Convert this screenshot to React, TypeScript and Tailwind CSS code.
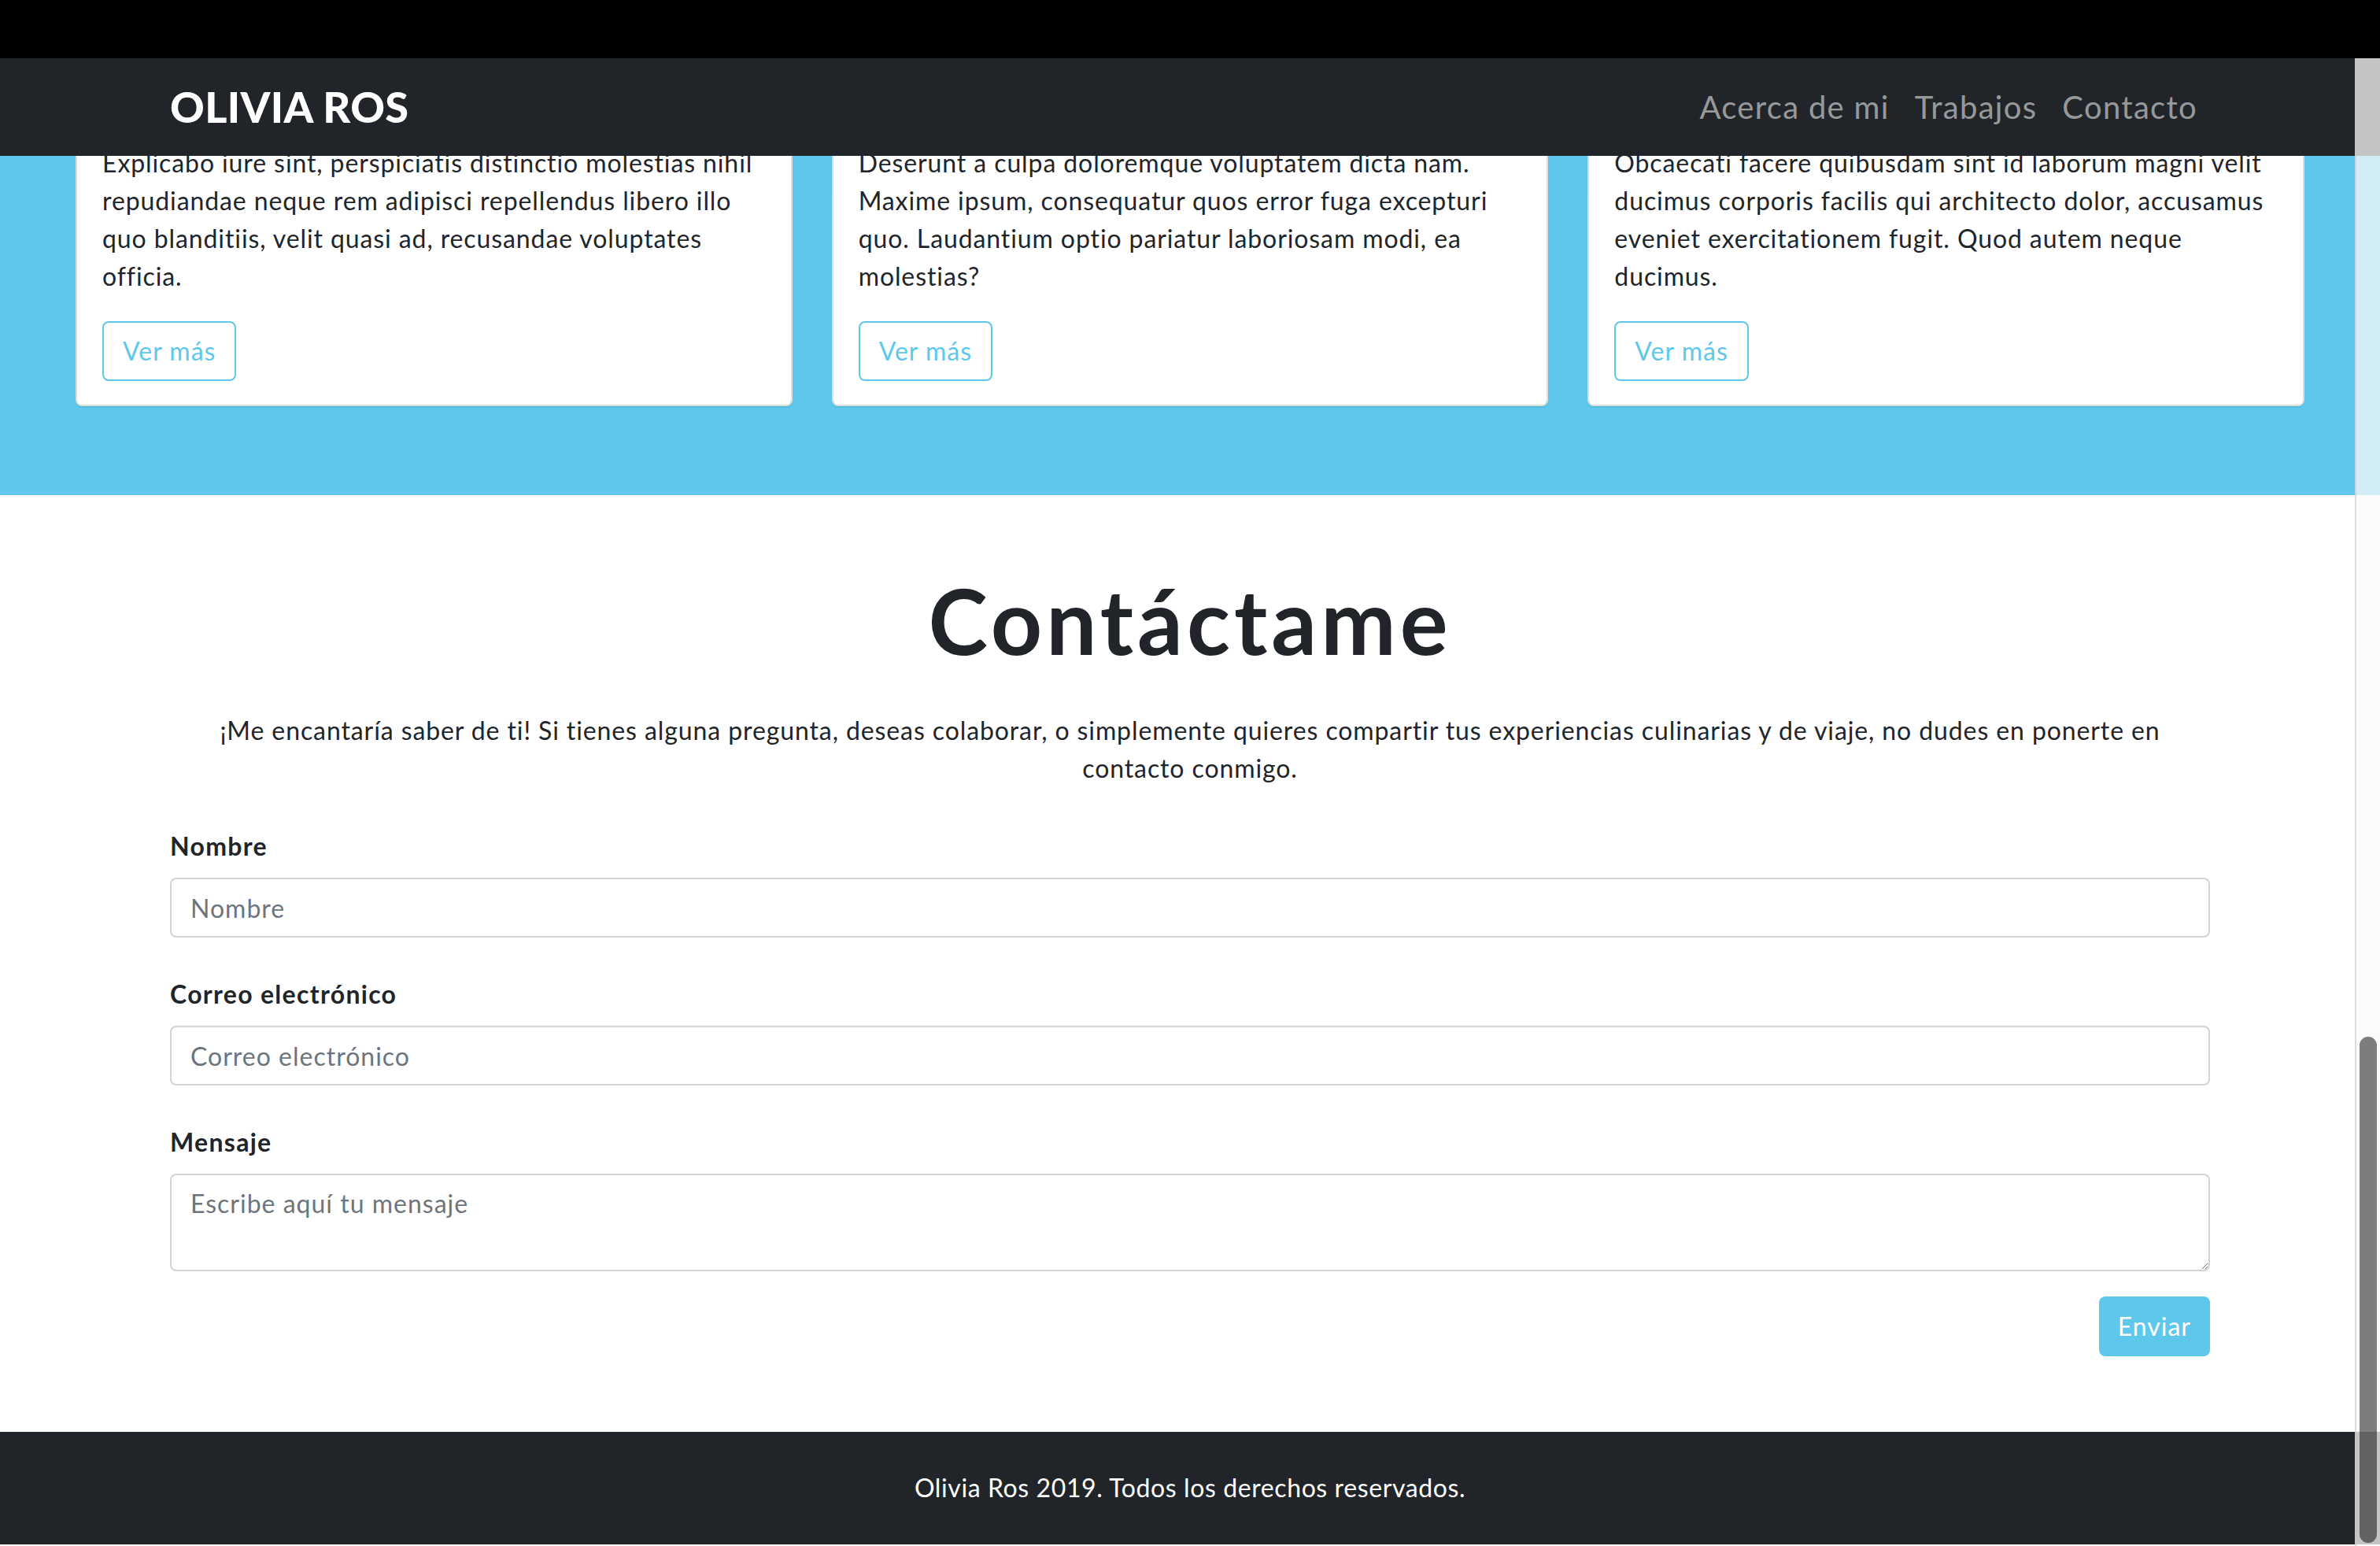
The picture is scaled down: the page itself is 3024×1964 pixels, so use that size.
import React from "react";

const cards: string[][] = [
  [
    "Explicabo iure sint, perspiciatis distinctio molestias nihil",
    "repudiandae neque rem adipisci repellendus libero illo",
    "quo blanditiis, velit quasi ad, recusandae voluptates",
    "officia.",
  ],
  [
    "Deserunt a culpa doloremque voluptatem dicta nam.",
    "Maxime ipsum, consequatur quos error fuga excepturi",
    "quo. Laudantium optio pariatur laboriosam modi, ea",
    "molestias?",
  ],
  [
    "Obcaecati facere quibusdam sint id laborum magni velit",
    "ducimus corporis facilis qui architecto dolor, accusamus",
    "eveniet exercitationem fugit. Quod autem neque",
    "ducimus.",
  ],
];

function Card({ lines }: { lines: string[] }) {
  return (
    <div className="rounded-b-[8px] border-2 border-t-0 border-[rgba(0,0,0,0.13)] bg-white px-[32px] pb-[30px] pt-[25px] shadow-[0_2px_0_rgba(0,0,0,0.06)]">
      <p className="mb-[33px] text-[32px] leading-[48px] tracking-[0.9px]">
        {lines.map((l, i) => (
          <span key={i} className="block whitespace-nowrap">
            {l}
          </span>
        ))}
      </p>
      <button className="h-[76px] rounded-[8px] border-2 border-[#5dc8ec] bg-white px-[24px] text-[32px] leading-[72px] tracking-[1px] text-[#5dc8ec]">
        Ver más
      </button>
    </div>
  );
}

function Field({ label, placeholder }: { label: string; placeholder: string }) {
  return (
    <div className="mb-[48px]">
      <label className="mb-[16px] block text-[32px] font-bold leading-[48px] tracking-[1.3px]">{label}</label>
      <input
        className="block h-[76px] w-full rounded-[8px] border-2 border-[#ced4da] bg-white px-[24px] text-[32px] leading-[48px] tracking-[1px] text-[#212529] outline-none placeholder:text-[#6c757d]"
        placeholder={placeholder}
      />
    </div>
  );
}

export default function App() {
  return (
    <div className="relative h-[1964px] w-[3024px] overflow-hidden bg-white font-['Lato','Open_Sans',sans-serif] text-[#212529]">
      <div className="h-[74px] bg-black" />
      <header className="relative z-10 flex h-[124px] items-center justify-between bg-[#212529] px-[216px]">
        <span className="text-[54px] font-black leading-none tracking-[0.4px] text-white">OLIVIA ROS</span>
        <nav className="flex">
          {["Acerca de mi", "Trabajos", "Contacto"].map((t) => (
            <a key={t} className="px-[16px] text-[40px] leading-[56px] tracking-[1.3px] text-[rgba(255,255,255,0.55)]">
              {t}
            </a>
          ))}
        </nav>
      </header>

      <section className="-mt-[40px] bg-[#5dc8ec] px-[96px] pb-[113px]">
        <div className="grid grid-cols-3 gap-[50px]">
          {cards.map((c, i) => (
            <Card key={i} lines={c} />
          ))}
        </div>
      </section>

      <section className="px-[216px] pb-[96px] pt-[92px]">
        <h1 className="mb-[49px] text-center text-[114px] font-bold leading-[134px] tracking-[5px]">Contáctame</h1>
        <p className="mb-[51px] text-center text-[32px] leading-[48px] tracking-[0.9px]">
          ¡Me encantaría saber de ti! Si tienes alguna pregunta, deseas colaborar, o simplemente quieres compartir tus experiencias culinarias y de viaje, no dudes en ponerte en
          <br />
          contacto conmigo.
        </p>
        <Field label="Nombre" placeholder="Nombre" />
        <Field label="Correo electrónico" placeholder="Correo electrónico" />
        <div>
          <label className="mb-[16px] block text-[32px] font-bold leading-[48px] tracking-[1.3px]">Mensaje</label>
          <textarea
            rows={2}
            className="block h-[124px] w-full rounded-[8px] border-2 border-[#ced4da] bg-white px-[24px] py-[12px] text-[32px] leading-[48px] tracking-[1px] outline-none placeholder:text-[#6c757d]"
            placeholder="Escribe aquí tu mensaje"
          />
        </div>
        <div className="mt-[32px] flex justify-end">
          <button className="h-[76px] rounded-[8px] bg-[#5dc8ec] px-[24px] text-[32px] leading-[76px] tracking-[1px] text-white">
            Enviar
          </button>
        </div>
      </section>

      <footer className="bg-[#212529] pb-[48px] pt-[47px] text-center text-[32px] leading-[48px] tracking-[0.6px] text-white">
        Olivia Ros 2019. Todos los derechos reservados.
      </footer>

      <div className="absolute bottom-0 right-0 top-[74px] z-20 flex w-[32px]">
        <div className="w-[2px] bg-[rgba(215,215,215,0.9)]" />
        <div className="relative flex-1 bg-[rgba(250,250,250,0.75)]">
          <div className="absolute left-[4px] top-[1243px] h-[643px] w-[22px] rounded-full bg-[rgba(0,0,0,0.5)]" />
        </div>
      </div>
    </div>
  );
}
